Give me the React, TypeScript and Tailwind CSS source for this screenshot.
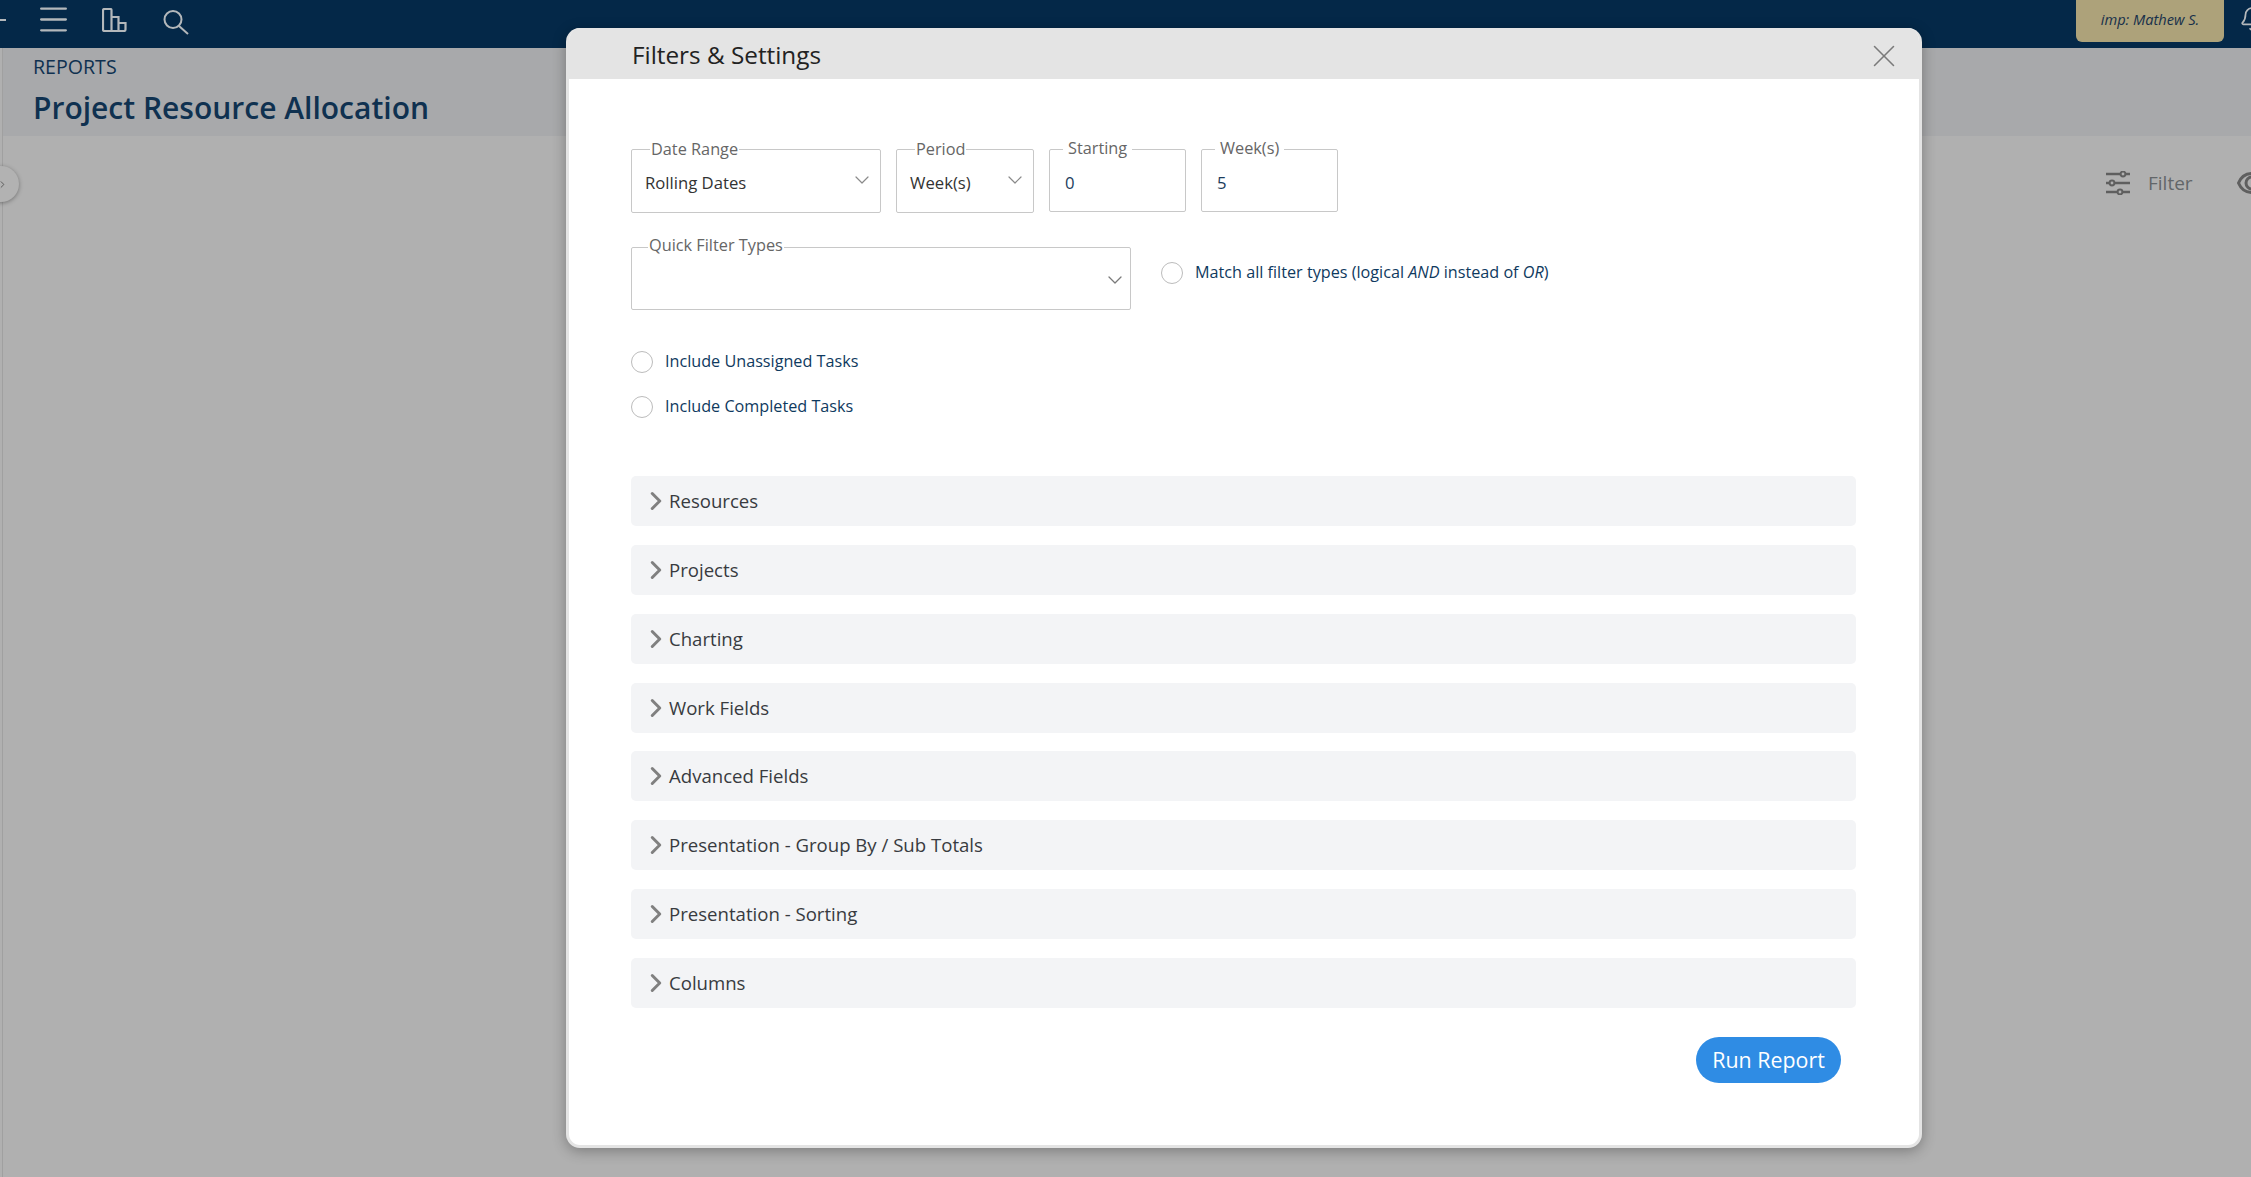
import { ReactNode } from 'react'
import { ChevronDown, ChevronRight, Menu, X, Bell } from 'lucide-react'

const sections = [
  'Resources',
  'Projects',
  'Charting',
  'Work Fields',
  'Advanced Fields',
  'Presentation - Group By / Sub Totals',
  'Presentation - Sorting',
  'Columns',
]

function Field({
  label,
  className,
  labelClass,
  children,
}: {
  label: string
  className: string
  labelClass: string
  children?: ReactNode
}) {
  return (
    <div className={`relative rounded-[2px] border border-[#c8c8c8] ${className}`}>
      <span className={`absolute bg-white text-[16.3px] leading-5 text-[#666] ${labelClass}`}>{label}</span>
      {children}
    </div>
  )
}

function Radio({ children }: { children: ReactNode }) {
  return (
    <label className="flex items-center gap-3 text-[16.2px] leading-[22px] text-[#0f3a60]">
      <span className="h-[22px] w-[22px] shrink-0 rounded-full border border-[#bcbcbc] bg-white" />
      <span className="-mt-[2px]">{children}</span>
    </label>
  )
}

function ReportsIcon() {
  return (
    <svg width="25" height="24" viewBox="0 0 25 24" fill="none" stroke="#b4b8bb" strokeWidth="2.2" className="ml-[30px] mt-[8px] shrink-0">
      <path d="M2.5 1h6a1 1 0 0 1 1 1V23h-7a1.5 1.5 0 0 1-1.5-1.5V2.5A1.5 1.5 0 0 1 2.5 1z" />
      <path d="M9.5 9h7v14M16.5 15h7v6.5a1.5 1.5 0 0 1-1.5 1.5H9.5" />
    </svg>
  )
}

function SearchIcon() {
  return (
    <svg width="27" height="26" viewBox="0 0 27 26" fill="none" stroke="#b4b8bb" strokeWidth="2" className="ml-[36px] mt-[9px] shrink-0">
      <circle cx="10" cy="10.5" r="8.5" />
      <path d="M16 17l9 8" />
    </svg>
  )
}

function FilterIcon() {
  return (
    <svg width="26" height="24" viewBox="0 0 26 24" fill="none" stroke="#5f5f5f" strokeWidth="2.4" className="shrink-0">
      <path d="M1 3h24M1 12h24M1 21h24" />
      <circle cx="18" cy="3" r="2.4" fill="#b0b0b0" strokeWidth="2" />
      <circle cx="7" cy="12" r="2.4" fill="#b0b0b0" strokeWidth="2" />
      <circle cx="15" cy="21" r="2.4" fill="#b0b0b0" strokeWidth="2" />
    </svg>
  )
}

export default function App() {
  return (
    <div className="relative h-[1177px] w-[2251px] overflow-hidden bg-[#b0b0b0] font-['Open_Sans',sans-serif]">
      <header className="relative flex h-12 items-start bg-[#042848] text-[#b4b8bb]">
        <span className="absolute left-0 top-[19px] h-[2px] w-[6px] bg-[#b4b8bb]" />
        <Menu size={37} strokeWidth={1.5} className="ml-[35px] mt-[1px] shrink-0" />
        <ReportsIcon />
        <SearchIcon />
        <div className="ml-auto flex h-full items-start">
          <div className="flex h-[42px] w-[148px] items-center justify-center rounded-b-[6px] bg-[#ada27a] pb-[2px] text-[14.6px] italic text-[#17304a]">
            imp: Mathew S.
          </div>
          <Bell size={26} strokeWidth={1.6} className="-mr-[14px] ml-[15px] mt-[6px] shrink-0" />
        </div>
      </header>

      <div className="flex h-[1129px]">
        <div className="w-[3px] shrink-0 border-r border-[#a0a0a0]" />
        <div className="min-w-0 flex-1">
          <div className="h-[88px] bg-[#a8a9ab] pl-[30px] pt-[6px] text-[#0f3150]">
            <div className="text-[19.6px] leading-[26px]">REPORTS</div>
            <h1 className="mt-[8px] text-[30px] font-semibold leading-[40px]">Project Resource Allocation</h1>
          </div>

          <div className="relative">
            <div className="absolute -left-[20px] top-[30px] flex h-9 w-9 items-center justify-center rounded-full bg-[#b2b2b2] shadow-[0_1px_4px_rgba(0,0,0,0.35)]">
              <ChevronRight size={11} className="ml-[2px] text-[#555]" />
            </div>
            <div className="flex items-center pl-[2102px] pt-[35px]">
              <FilterIcon />
              <span className="ml-[17px] text-[19px] leading-6 text-[#626669]">Filter</span>
              <svg width="30" height="24" viewBox="0 0 30 24" fill="none" stroke="#5f5f5f" strokeWidth="3" className="ml-[44px] shrink-0">
                <path d="M1.5 12C4 6 9 2.5 15 2.5s11 3.5 13.5 9.5c-2.5 6-7.5 9.5-13.5 9.5S4 18 1.5 12z" />
                <circle cx="15" cy="12" r="6" />
              </svg>
            </div>
          </div>
        </div>
      </div>

      <div className="absolute left-[566px] top-[28px] h-[1120px] w-[1356px] overflow-hidden rounded-[14px] border-x-[3px] border-b-[3px] border-[#e4e4e4] bg-white shadow-[0_3px_14px_rgba(0,0,0,0.3)]">
        <div className="flex h-[51px] items-center justify-between bg-[#e4e4e4] pl-[63px] pr-[16px]">
          <h2 className="mt-[3px] text-[24.3px] leading-8 text-[#222]">Filters &amp; Settings</h2>
          <X size={38} strokeWidth={1} className="mt-[4px] text-[#7a7a7a]" />
        </div>

        <div className="pl-[62px] pr-[63px] pt-[70px]">
          <div className="flex items-start gap-[15px]">
            <Field label="Date Range" className="h-[64px] w-[250px]" labelClass="left-[18px] -top-[11px] px-[1px]">
              <div className="pl-[13px] pt-[22px] text-[16.7px] leading-[22px] text-[#333]">Rolling Dates</div>
              <ChevronDown size={24} strokeWidth={1.2} className="absolute right-[6px] top-[18px] text-[#8a8a8a]" />
            </Field>
            <Field label="Period" className="h-[64px] w-[138px]" labelClass="left-[18px] -top-[11px] px-[1px]">
              <div className="pl-[13px] pt-[22px] text-[16.7px] leading-[22px] text-[#333]">Week(s)</div>
              <ChevronDown size={24} strokeWidth={1.2} className="absolute right-[6px] top-[18px] text-[#8a8a8a]" />
            </Field>
            <Field label="Starting" className="h-[63px] w-[137px]" labelClass="left-[13px] -top-[12px] px-[5px]">
              <div className="pl-[15px] pt-[22px] text-[16.7px] leading-[22px] text-[#1c3d5c]">0</div>
            </Field>
            <Field label="Week(s)" className="h-[63px] w-[137px]" labelClass="left-[13px] -top-[12px] px-[5px]">
              <div className="pl-[15px] pt-[22px] text-[16.7px] leading-[22px] text-[#1c3d5c]">5</div>
            </Field>
          </div>

          <div className="mt-[34px] flex items-start gap-[30px]">
            <Field label="Quick Filter Types" className="h-[63px] w-[500px]" labelClass="left-[16px] -top-[13px] px-[1px]">
              <ChevronDown size={24} strokeWidth={1.3} className="absolute right-[3px] top-[20px] text-[#7a7a7a]" />
            </Field>
            <div className="mt-[15px]">
              <Radio>
                Match all filter types (logical <i>AND</i> instead of <i>OR</i>)
              </Radio>
            </div>
          </div>

          <div className="mt-[41px] flex flex-col gap-[23px]">
            <Radio>Include Unassigned Tasks</Radio>
            <Radio>Include Completed Tasks</Radio>
          </div>

          <div className="mt-[58px] flex flex-col gap-[18.86px]">
            {sections.map((name) => (
              <div key={name} className="flex h-[50px] items-center rounded-[5px] bg-[#f3f4f6] pl-[10px] text-[18.6px] text-[#383b40]">
                <ChevronRight size={30} strokeWidth={2.4} className="-mr-[2px] shrink-0 text-[#808080]" />
                <span>{name}</span>
              </div>
            ))}
          </div>

          <div className="mt-[29px] flex justify-end pr-[15px]">
            <button className="flex h-[46px] w-[145px] items-center justify-center rounded-full bg-[#2f8ce4] text-[21.4px] text-white">
              Run Report
            </button>
          </div>
        </div>
      </div>
    </div>
  )
}
